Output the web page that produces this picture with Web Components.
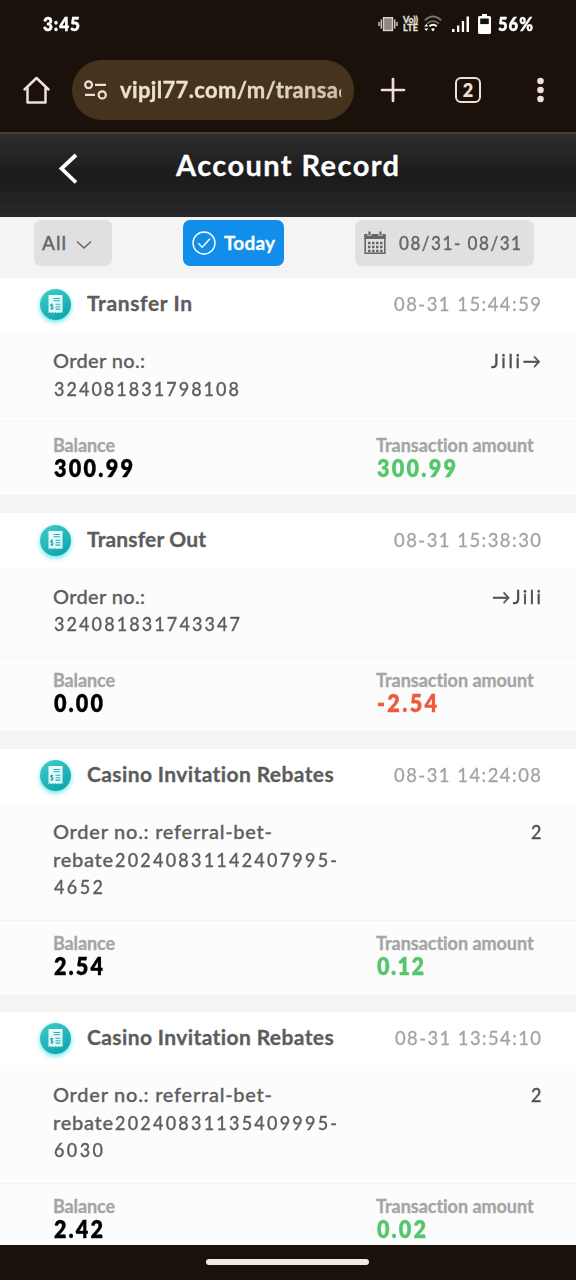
<!DOCTYPE html>
<html lang="en"><head><meta charset="utf-8"><title>Account Record</title>
<style>
html,body{margin:0;height:100%;overflow:hidden;background:#1a110a}
body{font-family:Lato,"Noto Sans",sans-serif}
</style></head><body><account-app></account-app>
<script>
const define=(name,html,setup)=>{
  const t=document.createElement('template');t.innerHTML=html;
  customElements.define(name,class extends HTMLElement{
    connectedCallback(){ if(this.shadowRoot)return;
      this.attachShadow({mode:'open'}).append(t.content.cloneNode(true));
      if(setup)setup(this,this.shadowRoot);}
  });
};

/* One line of text set to a given width: w = width in px, sx = horizontal glyph scale */
define('fit-text',`<style>:host{display:inline-block;white-space:pre;vertical-align:top;text-align:left;-webkit-text-stroke:.3px currentColor}
span{display:inline-block;transform-origin:0 50%}</style><span><slot></slot></span>`,(el,r)=>{
  const w=+el.getAttribute('w'),s=+(el.getAttribute('sx')||1),sp=r.querySelector('span');
  const n=el.textContent.length;
  const nat=sp.getBoundingClientRect().width;
  sp.style.letterSpacing=(n>1?(w/s-nat)/(n-1):0)+'px';
  sp.style.transform='scaleX('+s+')';
  el.style.width=w+'px';
});

define('status-bar',`<style>
:host{display:flex;height:48px;box-sizing:border-box;padding:0 0 0 43px;align-items:center;color:#fff;font-weight:800;font-size:18px;line-height:48px}
svg{display:block;flex:none}.v{width:15px;margin:0 6px 0 5px;font:700 9px/8.5px Lato,sans-serif;color:#e6e2de}
.v fit-text{display:block}
</style><fit-text w="37" sx=".95">3:45</fit-text>
<svg style="margin-left:298px" width="20" height="18" viewBox="0 0 20 18" fill="none" stroke="#d8d2cc" stroke-width="1.4"><rect x="5.5" y="2.7" width="9" height="12.8" fill="#8d8781"/><path d="M3.3 4.5v9M16.7 4.5v9M1 7v4M19 7v4"/></svg>
<div class="v"><fit-text w="15">Vo))</fit-text><fit-text w="15">LTE</fit-text></div>
<svg width="18" height="18" viewBox="0 0 18 18" fill="none"><path d="M.8 5.3Q9-2.2 17.2 5.3M3 8.6q6-5 12 0" stroke="#78716b" stroke-width="1.8"/><path d="M5.4 11.2q3.8-3 7.4 0" stroke="#fff" stroke-width="2"/><path d="m9 16.5-1.9-2.4q1.9-1.5 3.8 0zM.2 11.5 2.3 9l2.1 2.5zM.2 13.5 2.3 16l2.1-2.5z" fill="#fff"/></svg>
<svg style="margin-left:10px" width="18" height="17" viewBox="0 0 18 17" fill="#fff"><path d="M0 13h2.5v3H0zM5 9.5h2.3V16H5zM9.8 5h2.3v11H9.8zM14.5.5H17V16h-2.5z"/></svg>
<svg style="margin-left:8px" width="13" height="20" viewBox="0 0 13 20"><path d="M4 0h5v2h2.500Q13 2 13 3.500v15Q13 20 11.500 20h-10Q0 20 0 18.500v-15Q0 2 1.500 2H4z" fill="#fff"/><path d="M2.200 4.500h8.600v5.600H2.200z" fill="#1a110a"/></svg>
<fit-text style="margin-left:7px" w="35" sx=".92">56%</fit-text>`);

define('browser-bar',`<style>
:host{display:flex;height:84px;box-sizing:border-box;align-items:center;padding-left:22px;color:#eee0d0}
svg{display:block;flex:none;fill:none;stroke:#eee0d6;stroke-width:2.5}
.pill{display:flex;align-items:center;width:282px;height:60px;box-sizing:border-box;border-radius:30px;background:#46331e;margin-left:21px;padding-left:12px}
.url{display:flex;align-items:center;width:222px;margin-left:13px;font:700 22px/34px Lato,sans-serif;-webkit-mask-image:linear-gradient(90deg,#000 50%,#000c)}
.edge{width:1px;height:8px;margin:5px 0 0 1px;border-left:2px solid;border-radius:5px 0 0 5px}
.tab{width:22px;height:22px;border:2.6px solid #eee0d6;border-radius:6px;margin-left:49px;font:800 18px/22px Lato,sans-serif;text-align:center}
</style>
<svg width="29" height="30" viewBox="0 0 29 30" stroke-linejoin="round" stroke-linecap="round"><path d="M2.500 14.500 14.500 3l12 11.500M5.500 13v14.500h18V13"/></svg>
<div class="pill"><svg width="23" height="20" viewBox="0 0 23 20" style="stroke-width:2.200"><circle cx="4.600" cy="4.800" r="3.400"/><circle cx="18.200" cy="14.900" r="3.600"/><path d="M11 4.800h11M1 14.900h10"/></svg>
<div class="url"><fit-text w="218">vipjl77.com/m/transa</fit-text><div class="edge"></div></div></div>
<svg style="margin-left:26px" width="26" height="26" viewBox="0 0 26 26" stroke-linecap="round"><path d="M13 2v22M2 13h22" stroke-width="2.700"/></svg>
<div class="tab">2</div>
<svg style="margin-left:55px" width="8" height="26" viewBox="0 0 8 26"><g fill="#eee0d6" stroke="none"><circle cx="4.500" cy="4" r="3.300"/><circle cx="4.500" cy="13" r="3.300"/><circle cx="4.500" cy="22" r="3.300"/></g></svg>`);

define('page-header',`<style>
:host{display:flex;height:85px;box-sizing:border-box;padding-left:57px;border-top:2px solid #443d36;background:linear-gradient(#2d2d2d,#1b1b1b 52%,#27292b);color:#fff}
svg{display:block;margin-top:19px}fit-text{margin:12px 0 0 98px;font:700 29px/38px Lato,sans-serif}
</style><svg width="21" height="32" viewBox="0 0 21 32" fill="none" stroke="#fff" stroke-width="3.800"><path d="M19 2 4.500 15.500 19 29.500"/></svg><fit-text w="223">Account Record</fit-text>`);

define('filter-bar',`<style>
:host{display:flex;height:61px;box-sizing:border-box;padding:3px 0 0 34px;background:#f4f4f4;color:#666}
div{display:flex;height:46px;border-radius:7px;background:#e0e0e0;box-sizing:border-box;align-items:center;font:500 19px/44px Lato,sans-serif}
svg{display:block;flex:none;fill:none}
.all{width:78px;padding-left:8px}.today{width:101px;margin-left:71px;background:#118ee9;color:#fff;padding-left:9px;font-weight:700}
.date{width:179px;margin-left:71px;padding-left:9px}
</style>
<div class="all"><fit-text w="24">All</fit-text><svg style="margin:3px 0 0 10px" width="16" height="10" viewBox="0 0 16 10" stroke="#666" stroke-width="1.600"><path d="m1 1.500 7 6.500 7-6.500"/></svg></div>
<div class="today"><svg width="24" height="24" viewBox="0 0 24 24" stroke="#fff" stroke-width="1.400"><circle cx="12" cy="12" r="11"/><path d="m6.300 12.300 3.900 3.900 7.800-8.500"/></svg><fit-text style="margin-left:8px" w="51">Today</fit-text></div>
<div class="date"><svg width="22" height="24" viewBox="0 0 22 24"><path d="M1.200 4h19.600v18.300H1.200z" stroke="#666" stroke-width="1.600"/><path d="M.5 3h21v5H.5z" fill="#666"/><path d="M5.500 1v4M16.500 1v4" stroke="#e0e0e0" stroke-width="4"/><path d="M5.500 .5v4M16.500 .5v4" stroke="#666" stroke-width="2.200"/><path d="M4 12h14.500M4 16h14.500M4 20h14.500" stroke="#666" stroke-width="2.300" stroke-dasharray="2.500 1.500"/></svg><fit-text style="margin-left:13px" w="122" sx=".9">08/31- 08/31</fit-text></div>`);

define('receipt-icon',`<style>:host{display:block;width:31px;height:31px;border-radius:50%;background:linear-gradient(150deg,#42cdc8,#079fac);box-shadow:0 2px 5px #62e6e8}svg{display:block}</style>
<svg width="31" height="31" viewBox="0 0 31 31"><path d="M8.500 6h14v18.200l-1.400-1.300-1.400 1.300-1.400-1.300-1.400 1.300-1.400-1.300-1.400 1.300-1.400-1.300-1.400 1.300-1.400-1.300-1.400 1.300z" fill="#e6fafa"/><path d="M13.500 9.500H20M13.500 11.800H20M15.500 15.300h5M15.500 17.700h5M15.500 20.100h5M13.200 15.700q-2.600-.8-2.600.6 0 1 1.300 1.300t1.200 1.300q-.2 1.200-2.600.5M12 14.500v6.500" fill="none" stroke="#28acb5" stroke-width="1.100"/></svg>`);

define('record-card',`<style>
:host{display:block;background:#fcfcfc;margin-bottom:18px}
.head{height:53.500px;box-sizing:border-box;display:flex;align-items:center;padding:0 35px 0 40px;background:#fff;line-height:30px}
.body{display:flex;justify-content:space-between;padding:15.900px 35px 19.100px 53px;font-size:20px;line-height:27.500px;color:#5e5e5e;font-weight:500}
.foot{display:flex;height:74px;box-sizing:border-box;padding:11.300px 0 0 53px;border-top:1px solid #f5f5f5;font-weight:700}
.foot>div{width:323px;flex:none}
.label{font-size:18px;line-height:22px;color:#a5a5a5}.value{font-size:23.500px;line-height:24px;color:#000;font-weight:800;padding-left:1px}
.amt{color:var(--amount,#56c66c)}
::slotted([slot=title]){margin:-3px 0 0 16px;font-size:21px;font-weight:700;color:#5c5c5c}
::slotted([slot=time]){margin:-3px 0 0 auto;font-size:20px;color:#a3a3a3}
::slotted([slot=side]){color:#505050}
::slotted(div){white-space:nowrap}
</style><div class="head"><receipt-icon></receipt-icon><slot name="title"></slot><slot name="time"></slot></div>
<div class="body"><div><slot></slot></div><slot name="side"></slot></div>
<div class="foot"><div><div class="label"><fit-text w="62">Balance</fit-text></div><div class="value"><slot name="balance"></slot></div></div>
<div><div class="label"><fit-text w="158">Transaction amount</fit-text></div><div class="value amt"><slot name="amount"></slot></div></div></div>`);

define('nav-bar',`<style>:host{display:flex;height:35px;flex:none;justify-content:center;background:#1a110a}i{display:block;width:163px;height:6px;border-radius:3px;background:#eeebe3;margin:14px 2px 0 0}</style><i></i>`);

define('account-app',`<style>
:host{display:flex;flex-direction:column;width:576px;height:1280px;background:#1a110a;overflow:hidden}
status-bar,browser-bar,page-header,filter-bar{flex:none}
main{flex:1;min-height:0;overflow:hidden;background:#f4f4f4}
</style>
<status-bar></status-bar><browser-bar></browser-bar><page-header></page-header><filter-bar></filter-bar>
<main>
<record-card><fit-text slot="title" w="105">Transfer In</fit-text><fit-text slot="time" w="147" sx=".92">08-31 15:44:59</fit-text>
<div><fit-text w="92">Order no.:</fit-text></div><div><fit-text w="185" sx=".9" style="margin-left:1px">324081831798108</fit-text></div>
<fit-text slot="side" w="50" sx=".92">Jili→</fit-text><fit-text slot="balance" w="79" sx=".92">300.99</fit-text><fit-text slot="amount" w="79" sx=".92">300.99</fit-text></record-card>
<record-card style="--amount:#ee5a3c"><fit-text slot="title" w="119">Transfer Out</fit-text><fit-text slot="time" w="147" sx=".92">08-31 15:38:30</fit-text>
<div><fit-text w="92">Order no.:</fit-text></div><div><fit-text w="186" sx=".9" style="margin-left:1px">324081831743347</fit-text></div>
<fit-text slot="side" w="49" sx=".92">→Jili</fit-text><fit-text slot="balance" w="49" sx=".92">0.00</fit-text><fit-text slot="amount" w="60" sx=".92">-2.54</fit-text></record-card>
<record-card><fit-text slot="title" w="247">Casino Invitation Rebates</fit-text><fit-text slot="time" w="147" sx=".92">08-31 14:24:08</fit-text>
<div><fit-text w="219">Order no.: referral-bet-</fit-text></div><div><fit-text w="60">rebate</fit-text><fit-text w="222" sx=".9" style="margin-left:2px">20240831142407995-</fit-text></div><div><fit-text w="49" sx=".9" style="margin-left:1px">4652</fit-text></div>
<fit-text slot="side" w="10" sx=".9">2</fit-text><fit-text slot="balance" w="49" sx=".92">2.54</fit-text><fit-text slot="amount" w="47" sx=".92">0.12</fit-text></record-card>
<record-card><fit-text slot="title" w="247">Casino Invitation Rebates</fit-text><fit-text slot="time" w="146" sx=".92">08-31 13:54:10</fit-text>
<div><fit-text w="219">Order no.: referral-bet-</fit-text></div><div><fit-text w="60">rebate</fit-text><fit-text w="222" sx=".9" style="margin-left:2px">20240831135409995-</fit-text></div><div><fit-text w="49" sx=".9" style="margin-left:1px">6030</fit-text></div>
<fit-text slot="side" w="10" sx=".9">2</fit-text><fit-text slot="balance" w="49" sx=".92">2.42</fit-text><fit-text slot="amount" w="49" sx=".92">0.02</fit-text></record-card>
</main><nav-bar></nav-bar>`);
</script></body></html>
